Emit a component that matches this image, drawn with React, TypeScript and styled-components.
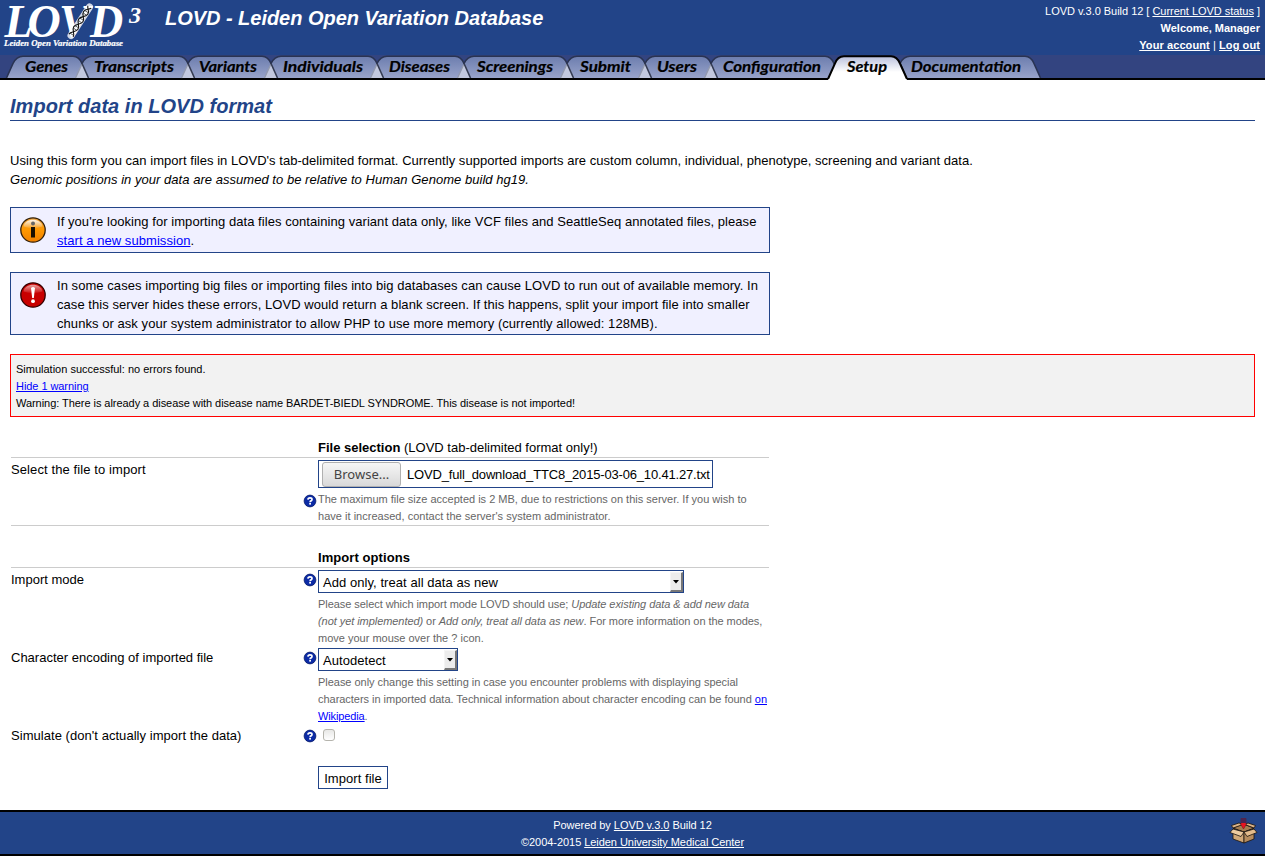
import React from 'react';
import styled, { createGlobalStyle } from 'styled-components';

const GlobalStyle = createGlobalStyle`
  * { box-sizing: border-box; }
  body {
    margin: 0;
    background: #fff;
    color: #000;
    font: 13px/19px "Liberation Sans", Arial, Helvetica, sans-serif;
  }
`;

const Page = styled.div`
  display: flex;
  flex-direction: column;
  height: 856px;
  overflow: hidden;
`;

const Header = styled.header`
  display: flex;
  height: 55px;
  background: #224488;
  color: #fff;
`;

const LogoSlot = styled.div`
  width: 165px;
  height: 55px;
`;

const SiteTitle = styled.h1`
  flex: 1;
  margin: 0;
  padding-top: 6px;
  font-size: 20px;
  line-height: 24px;
  font-style: italic;
  letter-spacing: -0.03px;
  white-space: nowrap;
`;

const Tracked = styled.span<{ $by: number }>`
  letter-spacing: ${(p) => p.$by}px;
`;

const Account = styled.div`
  padding: 3px 5px 0 0;
  text-align: right;
  font-size: 11px;
  line-height: 17px;
  white-space: nowrap;
`;

const LightLink = styled.a`
  color: #fff;
  text-decoration: underline;
`;

const TabStrip = styled.nav`
  display: flex;
  height: 25px;
  padding-left: 13px;
  background: #334480;
  border-bottom: 2px solid #000;
`;

const TabItem = styled.a<{ $width: number; $active?: boolean }>`
  flex: none;
  width: ${(p) => p.$width}px;
  height: 23px;
  position: relative;
  z-index: ${(p) => (p.$active ? 2 : 1)};

  svg {
    display: block;
    overflow: visible;
  }
`;

const Main = styled.main`
  flex: none;
  height: 730px;
  padding: 0 10px;
`;

const PageTitle = styled.h2`
  margin: 0;
  height: 41px;
  padding-top: 14px;
  border-bottom: 1px solid #224488;
  color: #224488;
  font-size: 20px;
  line-height: 24px;
  font-style: italic;
  letter-spacing: 0.03px;
`;

const Intro = styled.p`
  margin: 30px 0 18px;
  letter-spacing: 0.035px;
`;

const Notice = styled.div<{ $top: number; $bottom: number }>`
  display: flex;
  width: 760px;
  margin-bottom: 19px;
  padding: ${(p) => p.$top}px 0 ${(p) => p.$bottom}px 9px;
  border: 1px solid #224488;
  background: #f0f0ff;
  letter-spacing: 0.056px;
  white-space: nowrap;

  svg {
    flex: none;
    margin: ${(p) => 8 - p.$top}px 10px 0 0;
  }
`;

const Link = styled.a`
  color: #0000ff;
  text-decoration: underline;
`;

const Messages = styled.div`
  height: 63px;
  padding: 6px 5px 4px;
  border: 1px solid #f00;
  background: #f2f2f2;
  font-size: 11px;
  line-height: 17px;
`;

const Form = styled.form`
  width: 760px;
  padding-top: 21px;
`;

const SectionTitle = styled.div<{ $gap?: number }>`
  height: 20px;
  margin: ${(p) => p.$gap ?? 0}px 0 0 1px;
  padding-left: 307px;
  border-bottom: 1px solid #ccc;
  width: 758px;
`;

const Row = styled.div<{ $height: number; $line?: boolean }>`
  display: grid;
  grid-template-columns: 292px 15px 451px;
  width: 758px;
  height: ${(p) => p.$height}px;
  margin-left: 1px;
  padding-top: 2px;
  border-bottom: ${(p) => (p.$line ? '1px solid #ccc' : 'none')};
`;

const HelpCell = styled.div<{ $top?: number }>`
  padding-top: ${(p) => p.$top ?? 3}px;
  svg { display: block; }
`;

const Hint = styled.div<{ $track?: number }>`
  padding-top: 3px;
  color: #666;
  font-size: 11px;
  line-height: 17px;
  letter-spacing: ${(p) => p.$track ?? 0}px;
  white-space: nowrap;
`;

const FileField = styled.div`
  display: flex;
  align-items: center;
  width: 395px;
  height: 28px;
  padding-left: 3px;
  border: 1px solid #224488;
  letter-spacing: -0.17px;
  white-space: nowrap;
`;

const BrowseButton = styled.span`
  flex: none;
  width: 79px;
  height: 25px;
  margin-right: 6px;
  border: 1px solid #b0b0b0;
  border-radius: 3px;
  background: linear-gradient(#f6f6f6, #d9d9d9);
  color: #444;
  font: 13px/23px "Noto Sans", sans-serif;
  letter-spacing: 0;
  text-align: center;
`;

const SelectBox = styled.div<{ $width: number }>`
  display: flex;
  justify-content: space-between;
  width: ${(p) => p.$width}px;
  height: 23px;
  padding: 1px 0 0 4px;
  border: 1px solid #224488;
  line-height: 21px;
  letter-spacing: 0.06px;
`;

const SelectArrow = styled.span`
  display: flex;
  align-items: center;
  justify-content: center;
  width: 13px;
  height: 20px;
  border: solid;
  border-width: 1px 2px 2px 1px;
  border-color: #f4f4f4 #777 #777 #f4f4f4;
  background: #ececec;
`;

const CheckBox = styled.span`
  display: block;
  width: 12px;
  height: 12px;
  margin: 3px 0 0 5px;
  border: 1px solid #b5b4ad;
  border-radius: 3px;
  background: linear-gradient(#e8e8e6, #fff);
`;

const SubmitButton = styled.button`
  display: block;
  width: 70px;
  height: 23px;
  margin: 14px 0 0 308px;
  padding: 1px 0 0;
  border: 1px solid #224488;
  background: #fff;
  color: #000;
  font: 13px "Liberation Sans", sans-serif;
  letter-spacing: 0.06px;
  white-space: nowrap;
`;

const Footer = styled.footer`
  display: grid;
  grid-template-columns: 40px 1fr 40px;
  height: 46px;
  border: solid #000;
  border-width: 2px 0;
  background: #224488;
  color: #fff;
  text-align: center;
  font-size: 11px;
  line-height: 17px;
`;

const Credits = styled.div`
  padding-top: 5px;
  letter-spacing: -0.05px;
`;

const PackageSlot = styled.div`
  padding: 5px 0 0 4px;
  svg { display: block; }
`;

const Logo = () => (
  <svg width="150" height="52" viewBox="0 0 150 52" fill="#fff" fontFamily="'Liberation Serif', serif" fontStyle="italic" fontWeight="bold">
    <text x="4.500 27.500 59 90" y="37" fontSize="46">LOVD</text>
    <text x="129" y="23" fontSize="24" textLength="12" lengthAdjust="spacingAndGlyphs">3</text>
    <text x="4" y="45.500" fontSize="8.500" stroke="#fff" strokeWidth=".2" textLength="119" lengthAdjust="spacingAndGlyphs">Leiden Open Variation Database</text>
    <g transform="translate(71 35.500) rotate(-57)" fill="none">
      <path d="M0 0H34" stroke="#fff" strokeWidth="7" strokeLinecap="round" opacity=".8" />
      <path d="M0 -2.500C4 -2.500 5 2.500 9 2.500S14 -2.500 18 -2.500S23 2.500 27 2.500S31 -1 34 -2" stroke="#111" strokeWidth="1.100" />
      <path d="M0 2.500C4 2.500 5 -2.500 9 -2.500S14 2.500 18 2.500S23 -2.500 27 -2.500S31 1 34 2" stroke="#111" strokeWidth="1.100" />
      <path d="M1.500 -2V2M7.500 -2V2M10.500 -2V2M16.500 -2V2M19.500 -2V2M25.500 -2V2M28.500 -2V2" stroke="#333" strokeWidth=".7" />
    </g>
  </svg>
);

type TabData = { label: string; width: number; text: [number, number]; active?: boolean };

const tabs: TabData[] = [
  { label: 'Genes', width: 69, text: [12, 43] },
  { label: 'Transcripts', width: 106, text: [12, 80] },
  { label: 'Variants', width: 83, text: [11, 58] },
  { label: 'Individuals', width: 106, text: [12, 80] },
  { label: 'Diseases', width: 87, text: [12, 61] },
  { label: 'Screenings', width: 103, text: [13, 76] },
  { label: 'Submit', width: 78, text: [13, 51] },
  { label: 'Users', width: 66, text: [12, 40] },
  { label: 'Configuration', width: 123, text: [12, 98] },
  { label: 'Setup', width: 66, text: [13, 40], active: true },
  { label: 'Documentation', width: 134, text: [11, 110] },
];

const Tab = ({ tab, first }: { tab: TabData; first: boolean }) => {
  const w = tab.width;
  const top = `Q3.500 1.200 10 1.200H${w - 9}Q${w - 3} 1.200 ${w} 8.500`;
  const outline = `M-6.500 23L0 8.500${top}L${w + 6.5} 23`;
  const upper = `M0 8.500${top}L${w + 6.5} 23`;
  const raised = `M-6 24L1 8.500${top}L${w + 7} 24`;
  return (
    <TabItem $width={w} $active={tab.active}>
      <svg width={w} height="23">
        <defs>
          <linearGradient id={`tab-${tab.label}`} x1="0" y1="0" x2="0" y2="1">
            <stop offset="0" stopColor={tab.active ? '#b9c0dc' : '#6c7dae'} />
            <stop offset={tab.active ? '.65' : '1'} stopColor={tab.active ? '#fff' : '#98a3ca'} />
          </linearGradient>
        </defs>
        <path d={tab.active ? `${raised}V25.500H-6Z` : `${outline}Z`} fill={`url(#tab-${tab.label})`} />
        {!tab.active && !first && (
          <>
            <path d="M0 9L-6.500 23H6.500Z" fill="#c2c8de" />
            <path d="M0 9L-6.500 23" stroke="#9299ad" strokeWidth="1.300" />
            <path d="M-.2 8L6.500 23" stroke="#343b51" strokeWidth="1.600" />
          </>
        )}
        <path
          d={tab.active ? raised : first ? outline : upper}
          fill="none"
          stroke={tab.active ? '#000' : '#293352'}
          strokeWidth={tab.active ? 2 : 1.6}
        />
        <text
          x={tab.text[0]}
          y="17"
          fontFamily="Lato, sans-serif"
          fontSize="15.500"
          fontWeight="700"
          fontStyle="italic"
          stroke="#000"
          strokeWidth=".2"
          textLength={tab.text[1]}
          lengthAdjust="spacingAndGlyphs"
        >
          {tab.label}
        </text>
      </svg>
    </TabItem>
  );
};

const InfoIcon = () => (
  <svg width="27" height="27" viewBox="0.5 -0.5 27 27">
    <defs>
      <linearGradient id="orange" x1="0" y1="0" x2="0" y2="1">
        <stop offset="0" stopColor="#e8a040" />
        <stop offset=".5" stopColor="#ff9800" />
        <stop offset="1" stopColor="#f08000" />
      </linearGradient>
      <linearGradient id="shine" x1="0" y1="0" x2="0" y2="1">
        <stop offset="0" stopColor="#fff" stopOpacity=".9" />
        <stop offset="1" stopColor="#fff" stopOpacity=".1" />
      </linearGradient>
    </defs>
    <circle cx="13.500" cy="13.500" r="12.200" fill="url(#orange)" stroke="#33210c" strokeWidth="1.300" />
    <path d="M4 10C5 1 22 1 23 10Q13 13 4 10Z" fill="url(#shine)" />
    <rect x="11.500" y="10.500" width="4" height="10.500" fill="#1a1000" />
    <circle cx="13.500" cy="7" r="2" fill="#666" />
  </svg>
);

const WarnIcon = () => (
  <svg width="27" height="27" viewBox="0.5 -0.5 27 27">
    <circle cx="13.500" cy="13.500" r="12.200" fill="#c80000" stroke="#300" strokeWidth="1.300" />
    <path d="M4 10C5 1 22 1 23 10Q13 13 4 10Z" fill="url(#shine)" opacity=".7" />
    <path d="M11.500 6.500Q13.500 4.500 15.500 6.500L14.300 16.500H12.700Z" fill="#fff" />
    <circle cx="13.500" cy="19.700" r="1.900" fill="#fff" />
  </svg>
);

const HelpIcon = () => (
  <svg width="14" height="14" viewBox="0 0 14 14">
    <circle cx="7" cy="7" r="5.900" fill="#0c2ba6" stroke="#071a68" strokeWidth=".8" />
    <path d="M4.900 5.600Q5 3.900 7 3.900Q9 3.900 9 5.400Q9 6.400 8 6.900Q7.100 7.300 7.100 8.200" fill="none" stroke="#fff" strokeWidth="1.700" />
    <rect x="6.200" y="9" width="1.800" height="1.600" fill="#fff" />
  </svg>
);

const PackageIcon = () => (
  <svg width="30" height="28" viewBox="0 0 30 28" stroke="#1b130c" strokeWidth=".8" strokeLinejoin="round">
    <path d="M4 11L14 7L25 11L15 15Z" fill="#a57c50" />
    <path d="M4 12L15 15V26L4 22Z" fill="#d0a878" />
    <path d="M15 15L25 12V22L15 26Z" fill="#b58c5e" />
    <path d="M4 12L15 15L12 19.500L1 15.500Z" fill="#edcba0" />
    <path d="M15 15L25 12L28 15.500L18 19.500Z" fill="#e2bb8c" />
    <path d="M4 11L2.500 8.500L10 6L14 7.500ZM25 11L26.500 8.500L19 6L16 7.500Z" fill="#dcb488" />
    <path d="M12 1.500H17V7H17.500L14.500 12L11.500 7H12Z" fill="#e81420" stroke="#64101d" strokeWidth=".5" />
    <path d="M12 1.200H17V6H12Z" fill="#4b2550" stroke="none" />
  </svg>
);

const Arrow = () => (
  <svg width="6" height="4" viewBox="0 0 6 4"><path d="M0 0H6L3 3.500Z" /></svg>
);

export default function App() {
  return (
    <>
      <GlobalStyle />
      <Page>
        <Header>
          <LogoSlot><Logo /></LogoSlot>
          <SiteTitle>LOVD - Leiden Open Variation Database</SiteTitle>
          <Account>
            <Tracked $by={-0.03}>LOVD v.3.0 Build 12 [ <LightLink>Current LOVD status</LightLink> ]</Tracked><br />
            <b>Welcome, Manager</b><br />
            <Tracked $by={0.09}><LightLink><b>Your account</b></LightLink> | <LightLink><b>Log out</b></LightLink></Tracked>
          </Account>
        </Header>
        <TabStrip>
          {tabs.map((tab, i) => (
            <Tab key={tab.label} tab={tab} first={i === 0} />
          ))}
        </TabStrip>
        <Main>
          <PageTitle>Import data in LOVD format</PageTitle>
          <Intro>
            Using this form you can import files in LOVD's tab-delimited format. Currently supported imports are custom column, individual, phenotype, screening and variant data.<br />
            <i>Genomic positions in your data are assumed to be relative to Human Genome build hg19.</i>
          </Intro>
          <Notice $top={4} $bottom={2}>
            <InfoIcon />
            <div>
              If you're looking for importing data files containing variant data only, like VCF files and SeattleSeq annotated files, please<br />
              <Link>start a new submission</Link>.
            </div>
          </Notice>
          <Notice $top={3} $bottom={1}>
            <WarnIcon />
            <div>
              In some cases importing big files or importing files into big databases can cause LOVD to run out of available memory. In<br />
              case this server hides these errors, LOVD would return a blank screen. If this happens, split your import file into smaller<br />
              chunks or ask your system administrator to allow PHP to use more memory (currently allowed: 128MB).
            </div>
          </Notice>
          <Messages>
            Simulation successful: no errors found.<br />
            <Tracked $by={-0.06}><Link>Hide 1 warning</Link></Tracked><br />
            <Tracked $by={-0.05}>Warning: There is already a disease with disease name BARDET-BIEDL SYNDROME. This disease is not imported!</Tracked>
          </Messages>
          <Form>
            <SectionTitle><b>File selection</b> (LOVD tab-delimited format only!)</SectionTitle>
            <Row $height={68} $line>
              <Tracked $by={0.1}>Select the file to import</Tracked>
              <HelpCell $top={34}><HelpIcon /></HelpCell>
              <div>
                <FileField>
                  <BrowseButton>Browse...</BrowseButton>
                  LOVD_full_download_TTC8_2015-03-06_10.41.27.txt
                </FileField>
                <Hint>
                  The maximum file size accepted is 2 MB, due to restrictions on this server. If you wish to<br />
                  <Tracked $by={0.02}>have it increased, contact the server's system administrator.</Tracked>
                </Hint>
              </div>
            </Row>
            <SectionTitle $gap={22}><Tracked $by={0.07}><b>Import options</b></Tracked></SectionTitle>
            <Row $height={78}>
              <span>Import mode</span>
              <HelpCell><HelpIcon /></HelpCell>
              <div>
                <SelectBox $width={366}>Add only, treat all data as new<SelectArrow><Arrow /></SelectArrow></SelectBox>
                <Hint $track={-0.06}>
                  Please select which import mode LOVD should use; <i>Update existing data &amp; add new data</i><br />
                  <i>(not yet implemented)</i> or <i>Add only, treat all data as new</i>. For more information on the modes,<br />
                  <Tracked $by={0}>move your mouse over the ? icon.</Tracked>
                </Hint>
              </div>
            </Row>
            <Row $height={78}>
              <span>Character encoding of imported file</span>
              <HelpCell><HelpIcon /></HelpCell>
              <div>
                <SelectBox $width={140}>Autodetect<SelectArrow><Arrow /></SelectArrow></SelectBox>
                <Hint $track={-0.03}>
                  Please only change this setting in case you encounter problems with displaying special<br />
                  characters in imported data. Technical information about character encoding can be found <Link>on</Link><br />
                  <Tracked $by={-0.12}><Link>Wikipedia</Link>.</Tracked>
                </Hint>
              </div>
            </Row>
            <Row $height={28}>
              <Tracked $by={0.045}>Simulate (don't actually import the data)</Tracked>
              <HelpCell><HelpIcon /></HelpCell>
              <CheckBox />
            </Row>
            <SubmitButton type="button">Import file</SubmitButton>
          </Form>
        </Main>
        <Footer>
          <span />
          <Credits>
            Powered by <LightLink>LOVD v.3.0</LightLink> Build 12<br />
            ©2004-2015 <LightLink>Leiden University Medical Center</LightLink>
          </Credits>
          <PackageSlot><PackageIcon /></PackageSlot>
        </Footer>
      </Page>
    </>
  );
}
